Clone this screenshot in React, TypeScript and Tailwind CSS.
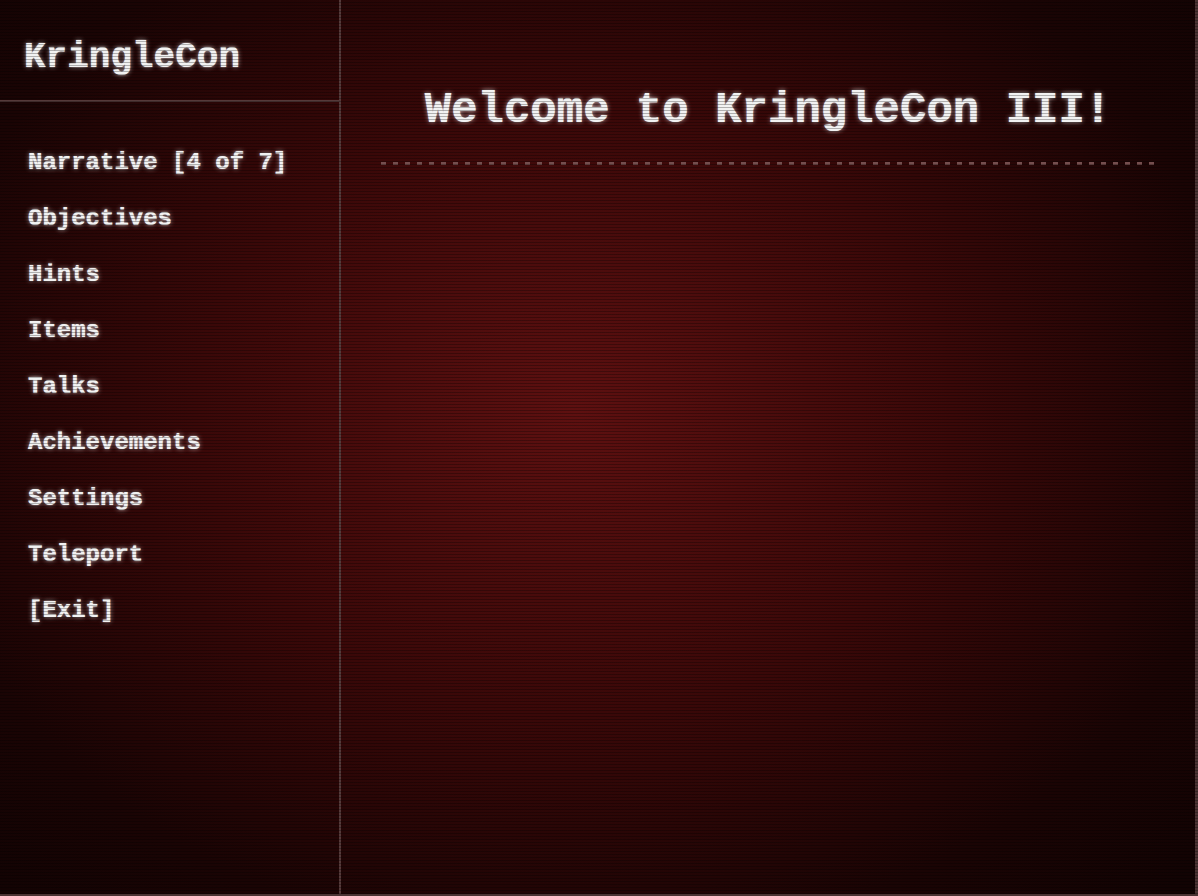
const MENU = [
  "Narrative [4 of 7]",
  "Objectives",
  "Hints",
  "Items",
  "Talks",
  "Achievements",
  "Settings",
  "Teleport",
  "[Exit]",
];

const glow = "[text-shadow:0_0_5px_rgba(255,255,255,0.6),0_0_1px_rgba(255,255,255,0.8)]";

export default function App() {
  return (
    <div className="relative h-[896px] w-[1198px] overflow-hidden bg-[radial-gradient(ellipse_70%_75%_at_48%_46%,#5e1010_0%,#3a0808_45%,#1a0404_80%,#120303_100%)] font-['Courier_New','Nimbus_Mono_PS','FreeMono','Liberation_Mono',monospace] font-bold text-[#f2f2f2]">
      <div className="flex h-full border-r-[3px] border-b-2 border-[#4a3333]">
        <aside className="flex w-[341px] shrink-0 flex-col border-r-2 border-[#553a3a]">
          <div className="flex h-[102px] items-center border-b-2 border-[#553a3a] pl-6 pt-[16px]">
            <h2 className={`text-[36px] leading-none ${glow}`}>KringleCon</h2>
          </div>
          <nav className="flex flex-col pt-[33px] pl-7">
            {MENU.map((item) => (
              <a key={item} className={`flex h-14 items-center text-[24px] leading-none ${glow}`}>
                {item}
              </a>
            ))}
          </nav>
        </aside>

        <main className="flex flex-1 flex-col px-10 pt-[85px]">
          <h1 className={`text-center text-[44px] leading-[50px] ${glow}`}>Welcome to KringleCon III!</h1>
          <div className="mt-[27px] h-[3px] bg-[repeating-linear-gradient(to_right,#754e4e_0px,#754e4e_5px,transparent_5px,transparent_12px)]" />
        </main>
      </div>

      {/* scanlines */}
      <div className="pointer-events-none absolute inset-0 bg-[repeating-linear-gradient(to_bottom,rgba(0,0,0,0)_0px,rgba(0,0,0,0)_2px,rgba(0,0,0,0.28)_2px,rgba(0,0,0,0.28)_3px)]" />
    </div>
  );
}
